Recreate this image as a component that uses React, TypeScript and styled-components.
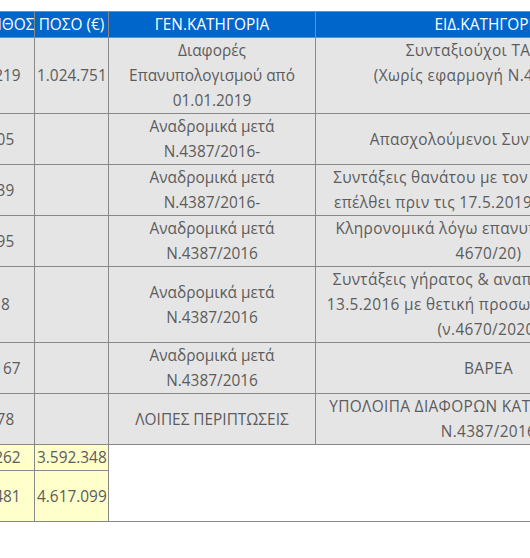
import styled, { createGlobalStyle } from "styled-components";

const GlobalStyle = createGlobalStyle`
  html, body {
    margin: 0;
    padding: 0;
    background: #fff;
  }
  body {
    font-family: "Open Sans", "Liberation Sans", sans-serif;
  }
`;

const Viewport = styled.div`
  width: 530px;
  height: 558px;
  overflow: hidden;
  padding-top: 11px;
  box-sizing: border-box;
`;

const Table = styled.table`
  margin-left: -33px;
  width: 694px;
  table-layout: fixed;
  border-collapse: collapse;
  font-size: 15.4px;
  line-height: 25px;
  color: #5c5c5c;
`;

const HeadCell = styled.th`
  background-color: #0066cc;
  color: #fff;
  font-weight: normal;
  border: 1px solid #888;
  padding: 0 2px;
  text-align: center;
  white-space: nowrap;
  overflow: hidden;
`;

const TotalRow = styled.tr<{ $lines?: number }>`
  height: ${(p) => (p.$lines ?? 1) * 25 + 1}px;
`;

const Cell = styled.td<{ $tone?: "total" | "blank"; $loose?: boolean }>`
  background-color: ${(p) =>
    p.$tone === "total" ? "#ffffcc" : p.$tone === "blank" ? "#fff" : "#e5e5e5"};
  border: 1px solid #888;
  padding: 0 2px;
  text-align: center;
  vertical-align: middle;
  white-space: nowrap;
  letter-spacing: ${(p) => (p.$loose ? "0.35px" : "normal")};
`;

type Row = {
  count: string;
  amount: string;
  general: string[];
  special: string[];
};

const rows: Row[] = [
  {
    count: "1.219",
    amount: "1.024.751",
    general: ["Διαφορές", "Επανυπολογισμού από", "01.01.2019"],
    special: ["Συνταξιούχοι ΤΑΥΤΕΚ.", "(Χωρίς εφαρμογή Ν.4387/2016", "\u00a0"],
  },
  {
    count: "105",
    amount: "",
    general: ["Αναδρομικά μετά", "Ν.4387/2016-"],
    special: ["Απασχολούμενοι Συνταξιούχοι."],
  },
  {
    count: "139",
    amount: "",
    general: ["Αναδρομικά μετά", "Ν.4387/2016-"],
    special: ["Συντάξεις θανάτου με τον θάνατο να έχει", "επέλθει πριν τις 17.5.2019 (βάσει ν.4670)"],
  },
  {
    count: "195",
    amount: "",
    general: ["Αναδρομικά μετά", "Ν.4387/2016"],
    special: ["Κληρονομικά λόγω επανυπολογισμού (ν.", "4670/20)"],
  },
  {
    count: "18",
    amount: "",
    general: ["Αναδρομικά μετά", "Ν.4387/2016"],
    special: [
      "Συντάξεις γήρατος & αναπηρίας μετά την",
      "13.5.2016 με θετική προσωπική διαφορά &",
      "(ν.4670/2020)",
    ],
  },
  {
    count: "1.167",
    amount: "",
    general: ["Αναδρομικά μετά", "Ν.4387/2016"],
    special: ["ΒΑΡΕΑ"],
  },
  {
    count: "178",
    amount: "",
    general: ["ΛΟΙΠΕΣ ΠΕΡΙΠΤΩΣΕΙΣ"],
    special: ["ΥΠΟΛΟΙΠΑ ΔΙΑΦΟΡΩΝ ΚΑΤΗΓΟΡΙΩΝ ΜΕΤΑ", "Ν.4387/2016"],
  },
];

function Lines({ items }: { items: string[] }) {
  return (
    <>
      {items.map((t, i) => (
        <span key={i}>
          {i > 0 && <br />}
          {t}
        </span>
      ))}
    </>
  );
}

function App() {
  return (
    <>
      <GlobalStyle />
      <Viewport>
        <Table>
          <colgroup>
            <col style={{ width: 67 }} />
            <col style={{ width: 74 }} />
            <col style={{ width: 207 }} />
            <col style={{ width: 346 }} />
          </colgroup>
          <thead>
            <tr>
              <HeadCell>ΠΛΗΘΟΣ</HeadCell>
              <HeadCell>ΠΟΣΟ (€)</HeadCell>
              <HeadCell>ΓΕΝ.ΚΑΤΗΓΟΡΙΑ</HeadCell>
              <HeadCell>ΕΙΔ.ΚΑΤΗΓΟΡΙΑ</HeadCell>
            </tr>
          </thead>
          <tbody>
            {rows.map((r, i) => (
              <tr key={i}>
                <Cell>{r.count}</Cell>
                <Cell>{r.amount}</Cell>
                <Cell>
                  <Lines items={r.general} />
                </Cell>
                <Cell $loose>
                  <Lines items={r.special} />
                </Cell>
              </tr>
            ))}
            <TotalRow>
              <Cell $tone="total">3.262</Cell>
              <Cell $tone="total">3.592.348</Cell>
              <Cell $tone="blank" colSpan={2} rowSpan={2} />
            </TotalRow>
            <TotalRow $lines={2}>
              <Cell $tone="total">4.481</Cell>
              <Cell $tone="total">4.617.099</Cell>
            </TotalRow>
          </tbody>
        </Table>
      </Viewport>
    </>
  );
}

export default App;
